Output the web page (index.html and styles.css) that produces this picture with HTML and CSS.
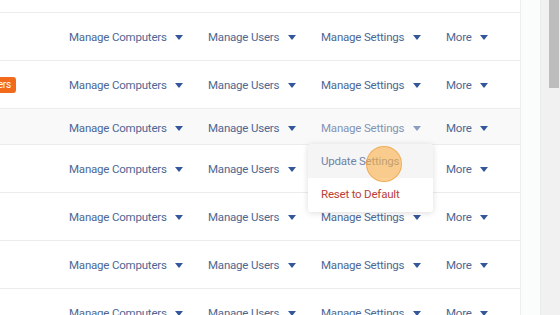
FILE: index.html
```html
<!DOCTYPE html>
<html lang="en">
<head>
    <meta charset="UTF-8">
    <title>Computers</title>
    <link rel="stylesheet" href="styles.css">
</head>
<body>
    <div class="page">
        <div class="main">
            <div class="row row-top"></div>

            <div class="row">
                <div class="name"></div>
                <div class="actions">
                    <span class="menu">Manage Computers <i class="caret"></i></span>
                    <span class="menu">Manage Users <i class="caret"></i></span>
                    <span class="menu">Manage Settings <i class="caret"></i></span>
                    <span class="menu">More <i class="caret"></i></span>
                </div>
            </div>

            <div class="row">
                <div class="name"><span class="badge">Users</span></div>
                <div class="actions">
                    <span class="menu">Manage Computers <i class="caret"></i></span>
                    <span class="menu">Manage Users <i class="caret"></i></span>
                    <span class="menu">Manage Settings <i class="caret"></i></span>
                    <span class="menu">More <i class="caret"></i></span>
                </div>
            </div>

            <div class="row row-hover">
                <div class="name"></div>
                <div class="actions">
                    <span class="menu">Manage Computers <i class="caret"></i></span>
                    <span class="menu">Manage Users <i class="caret"></i></span>
                    <span class="menu menu-open">Manage Settings <i class="caret"></i>
                        <div class="dropdown">
                            <div class="dropdown-item active">Update Settings</div>
                            <div class="dropdown-item danger">Reset to Default</div>
                            <span class="click-dot"></span>
                        </div>
                    </span>
                    <span class="menu">More <i class="caret"></i></span>
                </div>
            </div>

            <div class="row">
                <div class="name"></div>
                <div class="actions">
                    <span class="menu">Manage Computers <i class="caret"></i></span>
                    <span class="menu">Manage Users <i class="caret"></i></span>
                    <span class="menu">Manage Settings <i class="caret"></i></span>
                    <span class="menu">More <i class="caret"></i></span>
                </div>
            </div>

            <div class="row">
                <div class="name"></div>
                <div class="actions">
                    <span class="menu">Manage Computers <i class="caret"></i></span>
                    <span class="menu">Manage Users <i class="caret"></i></span>
                    <span class="menu">Manage Settings <i class="caret"></i></span>
                    <span class="menu">More <i class="caret"></i></span>
                </div>
            </div>

            <div class="row">
                <div class="name"></div>
                <div class="actions">
                    <span class="menu">Manage Computers <i class="caret"></i></span>
                    <span class="menu">Manage Users <i class="caret"></i></span>
                    <span class="menu">Manage Settings <i class="caret"></i></span>
                    <span class="menu">More <i class="caret"></i></span>
                </div>
            </div>

            <div class="row">
                <div class="name"></div>
                <div class="actions">
                    <span class="menu">Manage Computers <i class="caret"></i></span>
                    <span class="menu">Manage Users <i class="caret"></i></span>
                    <span class="menu">Manage Settings <i class="caret"></i></span>
                    <span class="menu">More <i class="caret"></i></span>
                </div>
            </div>
        </div>

        <div class="gutter"></div>

        <div class="scrollbar">
            <div class="thumb"></div>
        </div>
    </div>
</body>
</html>
```

FILE: styles.css
```css
html, body {
    margin: 0;
    padding: 0;
    height: 100%;
    overflow: hidden;
}

body {
    font-family: Roboto, "Open Sans", Arial, sans-serif;
    font-size: 11.5px;
    letter-spacing: -0.2px;
    background-color: white;
}

.page {
    display: flex;
    height: 315px;
}

.main {
    width: 520px;
    border-right: 1px solid #eceeef;
    overflow: hidden;
    flex-shrink: 0;
}

.row {
    display: flex;
    align-items: center;
    box-sizing: border-box;
    height: 48px;
    padding-top: 1px;
    border-bottom: 1px solid #ececec;
}

.row-top {
    height: 13px;
}

.row-hover {
    height: 36px;
    padding-top: 2px;
    background-color: #f9f9fa;
}

.name {
    width: 69px;
    flex-shrink: 0;
    display: flex;
    justify-content: flex-end;
    overflow: hidden;
}

.badge {
    margin-right: 53px;
    background-color: #f26b1d;
    color: white;
    font-size: 10px;
    padding: 1px 5px;
    border-radius: 3px;
    line-height: 14px;
}

.actions {
    display: grid;
    grid-template-columns: 139px 113px 125px auto;
    align-items: center;
}

.menu {
    position: relative;
    color: #4d6794;
    white-space: nowrap;
}

.caret {
    display: inline-block;
    width: 0;
    height: 0;
    margin-left: 6px;
    vertical-align: middle;
    border-left: 4px solid transparent;
    border-right: 4px solid transparent;
    border-top: 5px solid #34569a;
}

.menu-open {
    color: #8494b2;
}

.menu-open .caret {
    border-top-color: #8b9ec0;
}

.dropdown {
    position: absolute;
    left: -13px;
    top: 23px;
    width: 125px;
    background-color: white;
    border-radius: 3px;
    box-shadow: 0 1px 6px rgba(0, 0, 0, 0.14);
    padding: 0 0 2px;
    z-index: 2;
}

.dropdown-item {
    padding: 0 13px;
    line-height: 32px;
}

.dropdown-item.active {
    background-color: #f5f5f5;
    color: #7084a6;
    line-height: 34px;
    border-radius: 3px 3px 0 0;
}

.dropdown-item.danger {
    color: #bb3f35;
}

.click-dot {
    position: absolute;
    left: 58px;
    top: 2px;
    width: 34px;
    height: 34px;
    border-radius: 50%;
    background-color: rgba(251, 177, 72, 0.6);
    border: 1px solid rgba(235, 160, 70, 0.7);
}

.gutter {
    width: 19px;
    background-color: #fbfcfc;
    border-right: 1px solid #e9ecec;
}

.scrollbar {
    flex: 1;
    background-color: #f1f1f1;
    padding-left: 8px;
}

.thumb {
    width: 10px;
    height: 88px;
    background-color: #bdbdbd;
}
```
